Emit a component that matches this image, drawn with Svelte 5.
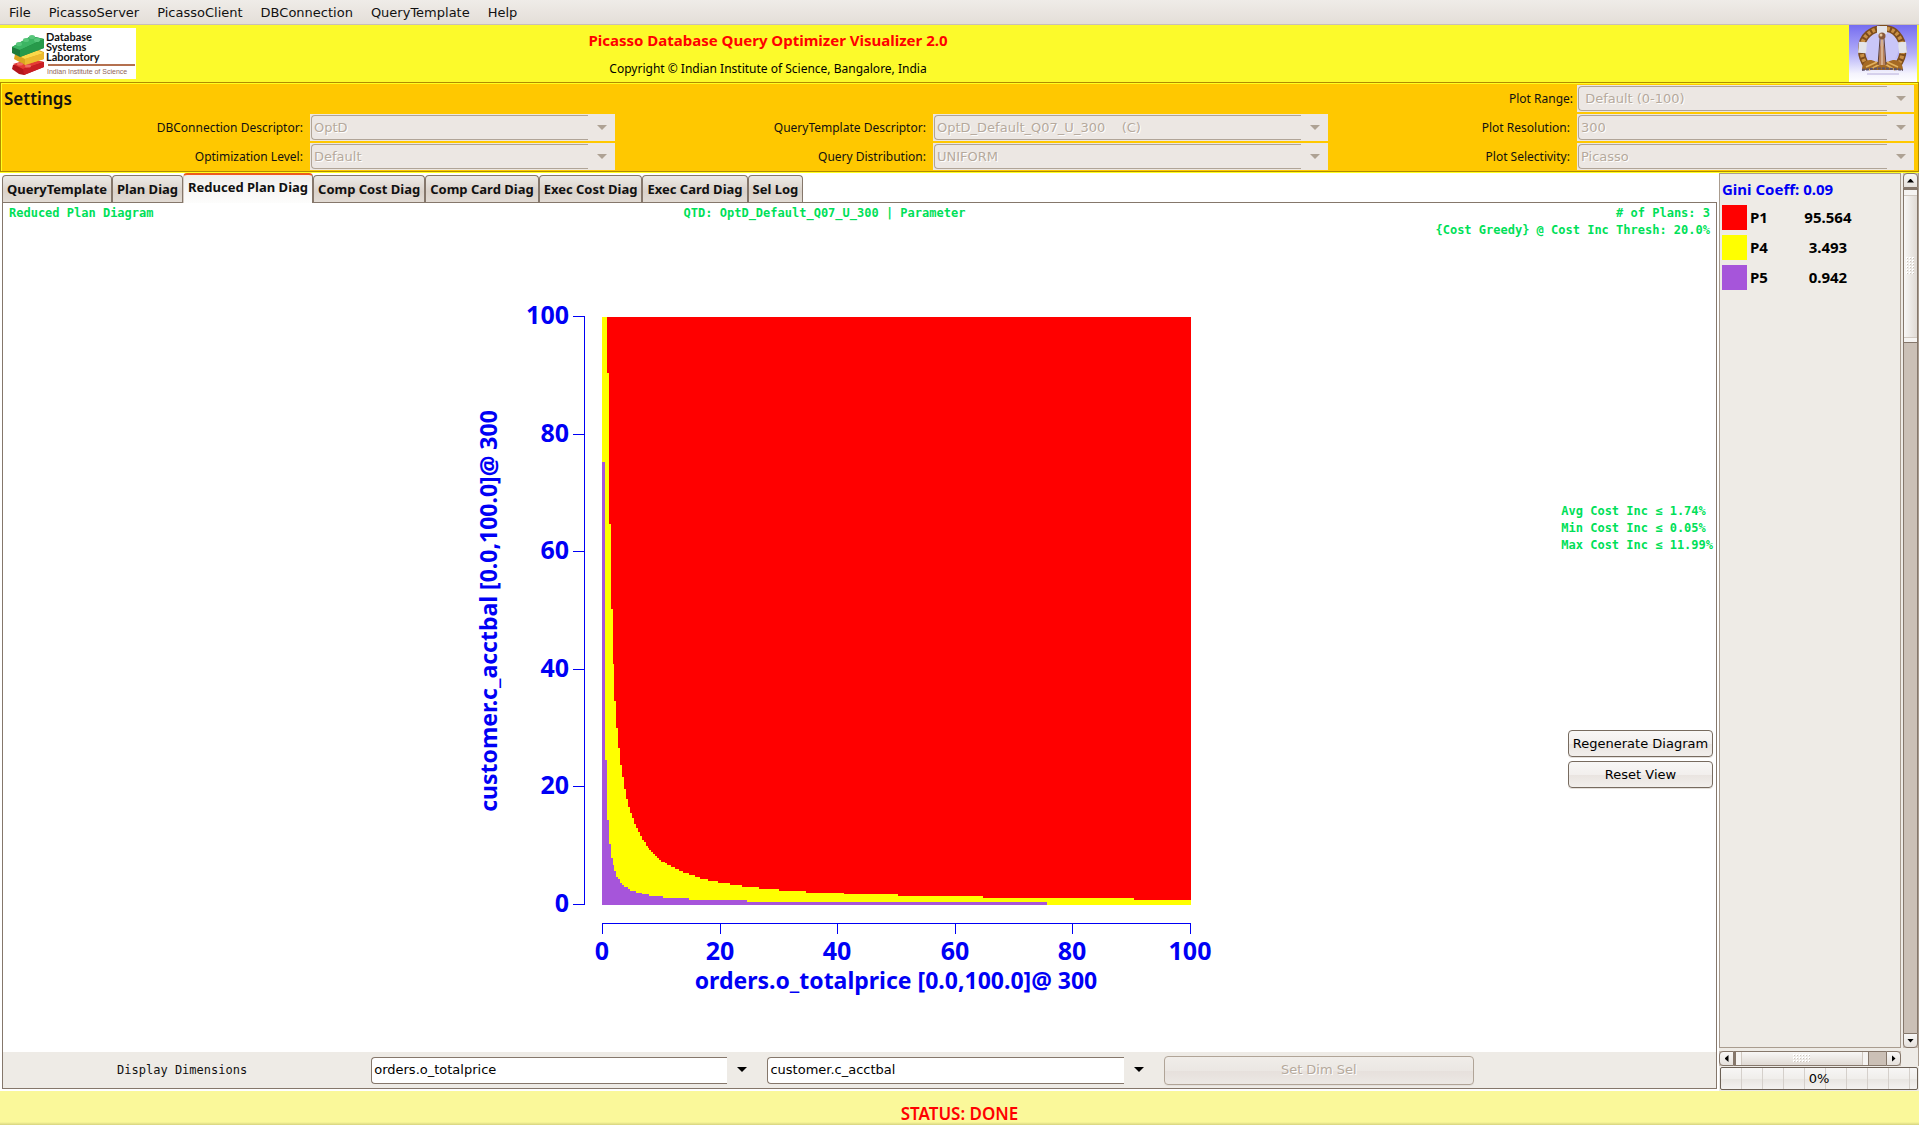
<script>
	const menus = ['File', 'PicassoServer', 'PicassoClient', 'DBConnection', 'QueryTemplate', 'Help'];

	const settings = [
		{ id: 'range', label: 'Plot Range:', value: '\u00a0Default (0-100)' },
		{ id: 'db', label: 'DBConnection Descriptor:\u00a0', value: 'OptD' },
		{ id: 'qtd', label: 'QueryTemplate Descriptor:\u00a0', value: 'OptD_Default_Q07_U_300\u00a0\u00a0\u00a0\u00a0(C)' },
		{ id: 'res', label: 'Plot Resolution:\u00a0', value: '300' },
		{ id: 'opt', label: 'Optimization Level:\u00a0', value: 'Default' },
		{ id: 'dist', label: 'Query Distribution:\u00a0', value: 'UNIFORM' },
		{ id: 'sel', label: 'Plot Selectivity:\u00a0', value: 'Picasso' }
	];

	const tabs = [
		'QueryTemplate',
		'Plan Diag',
		'Reduced Plan Diag',
		'Comp Cost Diag',
		'Comp Card Diag',
		'Exec Cost Diag',
		'Exec Card Diag',
		'Sel Log'
	];
	let activeTab = $state('Reduced Plan Diag');

	const dimensions = ['orders.o_totalprice', 'customer.c_acctbal'];
	let xDim = $state('orders.o_totalprice');
	let yDim = $state('customer.c_acctbal');

	const plans = [
		{ name: 'P1', share: '95.564', color: '#ff0000' },
		{ name: 'P4', share: '3.493', color: '#ffff00' },
		{ name: 'P5', share: '0.942', color: '#a655da' }
	];

	const costs = ['Avg Cost Inc ≤ 1.74%', 'Min Cost Inc ≤ 0.05%', 'Max Cost Inc ≤ 11.99%'];

	const ticks = [0, 20, 40, 60, 80, 100];
	const plotWidth = 589;
	const plotHeight = 588;

	// [right edge, top edge] of each column in the staircase
	const p4Steps = [
		[5, 0], [7, 56], [9, 207], [11, 292], [12, 347], [14, 384], [16, 411], [18, 431],
		[20, 448], [22, 460], [24, 472], [26, 482], [28, 490], [30, 496], [32, 501], [34, 507],
		[36, 511], [38, 515], [40, 519], [42, 523], [44, 525], [46, 529], [47, 531], [49, 533],
		[51, 535], [53, 537], [55, 539], [57, 541], [59, 543], [63, 545], [65, 546], [69, 548],
		[73, 550], [77, 552], [81, 554], [87, 556], [93, 558], [98, 560], [106, 562], [116, 564],
		[128, 566], [140, 568], [157, 570], [177, 572], [204, 574], [242, 576], [296, 577],
		[381, 579], [532, 581], [589, 583]
	];
	const p5Steps = [
		[3, 145], [5, 443], [7, 503], [9, 527], [11, 541], [12, 548], [14, 554], [16, 560],
		[18, 562], [20, 566], [22, 568], [26, 570], [28, 572], [34, 574], [40, 576], [47, 577],
		[61, 579], [87, 581], [145, 583], [445, 585]
	];

	function staircase(steps) {
		let d = `M0 ${plotHeight}V${steps[0][1]}`;
		for (const [x, y] of steps) {
			d += `V${y}H${x}`;
		}
		return d + `V${plotHeight}Z`;
	}
</script>

<svelte:head>
	<title>Picasso Database Query Optimizer Visualizer 2.0</title>
</svelte:head>

{#snippet grip(cols, rows)}
	<svg width={cols * 3} height={rows * 3} aria-hidden="true">
		{#each Array(cols) as _, c}
			{#each Array(rows) as _, r}
				<rect x={c * 3} y={r * 3} width="2" height="2" fill="#fff" />
				<rect x={c * 3 + 1} y={r * 3 + 1} width="1" height="1" fill="#cdc5bd" />
			{/each}
		{/each}
	</svg>
{/snippet}

<div class="app">
	<nav class="menubar">
		{#each menus as menu}
			<button class="menu">{menu}</button>
		{/each}
	</nav>

	<header class="banner">
		<svg class="logo" width="136" height="51" viewBox="0 0 136 51" role="img" aria-label="Database Systems Laboratory">
			<rect width="136" height="51" fill="#fff" />
			<path d="M13 37L33 32L44 34V39L24 47L19 46L12 41Z" fill="#b3151b" />
			<path d="M13 36L30 31L44 34L23 41Z" fill="#e43a35" />
			<path d="M23 41L44 34V39L24 47Z" fill="#c81e24" />
			<path d="M15 26L36 21L44 24V31L25 37L14 31Z" fill="#d9a520" />
			<path d="M15 26L36 22L44 25L25 31Z" fill="#fbd84a" />
			<path d="M25 31L44 25V31L25 37Z" fill="#ecb92f" />
			<path d="M12 19L31 8L44 11V20L20 29L12 25Z" fill="#1c7a3c" />
			<path d="M12 19L31 8L44 11L20 22Z" fill="#3cb563" />
			<path d="M20 22L44 11V20L20 29Z" fill="#279a4a" />
			<g fill="#58c67b">
				<ellipse cx="19" cy="16" rx="3" ry="2" />
				<ellipse cx="26" cy="12" rx="3" ry="2" />
				<ellipse cx="32" cy="9" rx="3" ry="2" />
				<ellipse cx="37" cy="12" rx="3" ry="2" />
			</g>
			<g fill="#f06a60">
				<ellipse cx="20" cy="36" rx="3" ry="1.5" />
				<ellipse cx="28" cy="38" rx="3" ry="1.5" />
			</g>
			<g class="logo-name" fill="#111">
				<text x="46" y="13">Database</text>
				<text x="46" y="23">Systems</text>
				<text x="46" y="33">Laboratory</text>
			</g>
			<rect x="48" y="36" width="87" height="2" fill="#b4704f" />
			<text class="logo-sub" x="47" y="46" fill="#8f6558">Indian Institute of Science</text>
		</svg>

		<div class="titles">
			<h1>Picasso Database Query Optimizer Visualizer 2.0</h1>
			<p>Copyright © Indian Institute of Science, Bangalore, India</p>
		</div>

		<svg class="emblem" width="68" height="57" viewBox="0 0 68 57" role="img" aria-label="Indian Institute of Science">
			<defs>
				<linearGradient id="sky" x1="0" y1="0" x2="0" y2="1">
					<stop offset="0" stop-color="#766df0" />
					<stop offset="0.5" stop-color="#b3aff8" />
					<stop offset="0.85" stop-color="#f4f3fd" />
					<stop offset="1" stop-color="#fff" />
				</linearGradient>
			</defs>
			<rect width="68" height="57" fill="url(#sky)" />
			<ellipse cx="33" cy="22" rx="17" ry="18" fill="#c9c6f8" />
			<path d="M18 41C10 30 11 16 19 9S41 1 48 9S57 30 48 41" fill="none" stroke="#7d4c1c" stroke-width="7" />
			<path d="M18 41C10 30 11 16 19 9S41 1 48 9S57 30 48 41" fill="none" stroke="#c98f45" stroke-width="4" stroke-dasharray="3 2" />
			<path d="M13 28L14 17M54 28L53 17M28 5H38" fill="none" stroke="#e4e4e8" stroke-width="8" />
			<path d="M13 45C13 37 19 32 27 37H39C47 32 54 37 54 45Z" fill="#a56a24" />
			<path d="M17 42L28 37M49 42L38 37M20 45L31 39M46 45L36 39" stroke="#e2b15c" stroke-width="1.5" />
			<path d="M32 13H34L37 40H29Z" fill="#b9825a" />
			<path d="M33 13V40" stroke="#f2dcc0" />
			<path d="M31 14L29 40M35 14L37 40" stroke="#5b3f38" />
			<circle cx="33" cy="11" r="3.5" fill="#8a5a3a" />
			<circle cx="32" cy="10" r="1.5" fill="#e8c9a0" />
			<path d="M13 45Q33 42 54 45" fill="none" stroke="#5e5368" stroke-width="2" stroke-dasharray="3 1" />
			<path d="M18 49H50" stroke="#d5d0ec" stroke-width="2" />
		</svg>
	</header>

	<section class="settings">
		<h2>Settings</h2>
		{#each settings as s}
			<label for={s.id} style:grid-area="{s.id}-l">{s.label}</label>
			<div class="combo disabled" style:grid-area={s.id}>
				<select id={s.id} disabled>
					<option>{s.value}</option>
				</select>
			</div>
		{/each}
	</section>

	<div class="body">
		<main>
			<div class="tabs" role="tablist">
				{#each tabs as tab}
					<button
						class="tab"
						class:active={activeTab === tab}
						role="tab"
						aria-selected={activeTab === tab}
						onclick={() => (activeTab = tab)}
					>
						{tab}
					</button>
				{/each}
			</div>

			<div class="panel">
				<div class="plot">
					<div class="plot-head">
						<p>Reduced Plan Diagram</p>
						<p class="center">QTD: OptD_Default_Q07_U_300 | Parameter</p>
						<p class="right"># of Plans: 3<br />&lbrace;Cost Greedy&rbrace; @ Cost Inc Thresh: 20.0%</p>
					</div>

					<svg class="chart" viewBox="-20 0 800 700" role="img" aria-label="Reduced plan diagram">
						<g transform="translate(122 21)">
							<rect width={plotWidth} height={plotHeight} fill={plans[0].color} />
							<path d={staircase(p4Steps)} fill={plans[1].color} />
							<path d={staircase(p5Steps)} fill={plans[2].color} />

							<path class="axis" d="M-18 -1V588M0 606H589" />
							{#each ticks as t}
								{@const x = Math.round((t / 100) * (plotWidth - 1))}
								{@const y = Math.round(plotHeight - 1 - (t / 100) * plotHeight)}
								<path class="axis" d="M-29 {y}H-18M{x} 606V617" />
								<text class="tick" x="-33" y={y + 8} text-anchor="end">{t}</text>
								<text class="tick" {x} y="643" text-anchor="middle">{t}</text>
							{/each}
							<text class="name" x="294" y="672" text-anchor="middle">orders.o_totalprice [0.0,100.0]@ 300</text>
							<text class="name" transform="translate(-105 294) rotate(-90)" text-anchor="middle">customer.c_acctbal [0.0,100.0]@ 300</text>
						</g>
					</svg>

					<div class="tools">
						<div class="costs">
							{#each costs as cost}
								<p>{cost}</p>
							{/each}
						</div>
						<button class="btn">Regenerate Diagram</button>
						<button class="btn">Reset View</button>
					</div>
				</div>

				<div class="dims">
					<span class="dims-label">Display Dimensions</span>
					<div class="combo">
						<select bind:value={xDim} aria-label="X dimension">
							{#each dimensions as dim}
								<option>{dim}</option>
							{/each}
						</select>
					</div>
					<div class="combo">
						<select bind:value={yDim} aria-label="Y dimension">
							{#each dimensions as dim}
								<option>{dim}</option>
							{/each}
						</select>
					</div>
					<button class="btn" disabled>Set Dim Sel</button>
				</div>
			</div>
		</main>

		<aside>
			<div class="scroller">
				<div class="legend">
					<p class="gini">Gini Coeff: 0.09</p>
					<table>
						<tbody>
							{#each plans as plan}
								<tr>
									<td class="swatch"><i style:background={plan.color}></i></td>
									<th scope="row">{plan.name}</th>
									<td class="share">{plan.share}</td>
								</tr>
							{/each}
						</tbody>
					</table>
				</div>
				<div class="vbar">
					<button class="arrow up" aria-label="Scroll up"></button>
					<div class="thumb">{@render grip(3, 6)}</div>
					<div class="trough"></div>
					<button class="arrow down" aria-label="Scroll down"></button>
				</div>
				<div class="hbar">
					<button class="arrow left" aria-label="Scroll left"></button>
					<div class="thumb">{@render grip(6, 3)}</div>
					<div class="trough"></div>
					<button class="arrow next" aria-label="Scroll right"></button>
				</div>
			</div>
			<div class="progress" role="progressbar" aria-label="Progress" aria-valuenow="0">0%</div>
		</aside>
	</div>

	<footer>STATUS: DONE</footer>
</div>

<style>
	:global(body) {
		margin: 0;
	}

	.app {
		--ui: 'DejaVu Sans', sans-serif;
		--label: 'Noto Sans', 'Open Sans', sans-serif;
		--mono: 'DejaVu Sans Mono', monospace;
		--line: #85776b;
		--face: #eeebe6;
		display: flex;
		flex-direction: column;
		min-height: 100vh;
		background: #fff;
		color: #111;
		font: 13px/16px var(--ui);
	}

	h1,
	h2,
	p {
		margin: 0;
	}

	button,
	select {
		box-sizing: border-box;
		margin: 0;
		font: inherit;
		color: inherit;
	}

	.menubar {
		display: flex;
		height: 24px;
		border-bottom: 1px solid #c9bfb6;
		background: linear-gradient(#efece8, #e4ded8);
	}

	.menu {
		padding: 1px 9px 0;
		border: 0;
		background: none;
	}

	.banner {
		display: grid;
		grid-template-columns: 136px 1264fr 449fr 70px;
		align-items: center;
		height: 57px;
		background: #fcfa2b;
	}

	.logo,
	.emblem {
		display: block;
	}

	.emblem {
		grid-column: 4;
	}

	.logo-name {
		font: bold 11px 'Lato', sans-serif;
	}

	.logo-sub {
		font: 7px 'Liberation Sans', sans-serif;
	}

	.titles {
		text-align: center;
		font: 12px/18px var(--label);
		color: #000;
	}

	.titles h1 {
		margin-bottom: 10px;
		font: bold 15px/20px var(--label);
		color: #f00;
	}

	.settings {
		display: grid;
		grid-template-columns: 308fr 305fr 318fr 395fr 249fr 337fr 3px;
		grid-template-areas:
			'title title . . range-l range .'
			'db-l db qtd-l qtd res-l res .'
			'opt-l opt dist-l dist sel-l sel .';
		grid-auto-rows: 27px;
		gap: 2px 0;
		margin-bottom: 1px;
		padding: 2px 1px 1px;
		border: 1px solid #b08c00;
		background: #ffc800;
		box-shadow: inset 1px 1px #ffff20, 0 1px #ffff20;
		font: 12px/27px var(--label);
	}

	.settings h2 {
		grid-area: title;
		padding-left: 2px;
		font: 600 17px/27px var(--label);
	}

	.settings label {
		padding-right: 4px;
		text-align: right;
		white-space: nowrap;
	}

	.combo {
		position: relative;
		display: flex;
		min-width: 0;
		padding: 1px 27px 1px 1px;
	}

	.combo::after {
		content: '';
		position: absolute;
		right: 8px;
		top: calc(50% - 3px);
		border: 5px solid transparent;
		border-top-color: #000;
		border-bottom: 0;
		pointer-events: none;
	}

	.combo select {
		flex: 1;
		min-width: 0;
		padding: 0 2px;
		appearance: none;
		border: 1px solid var(--line);
		border-right: 0;
		border-radius: 4px 0 0 4px;
		background: #fff;
		color: #000;
		font: 13px/20px var(--ui);
	}

	.combo.disabled {
		background: #ece7e3;
	}

	.combo.disabled::after {
		border-top-color: #aea294;
	}

	.combo.disabled select {
		border-color: #b0a497;
		background: #ece7e3;
		color: #b5a99c;
		opacity: 1;
		text-shadow: 1px 1px #fff;
	}

	.body {
		flex: 1;
		display: flex;
		gap: 2px;
	}

	main {
		flex: 1;
		min-width: 0;
		display: flex;
		flex-direction: column;
		padding: 0 0 2px 2px;
	}

	.tabs {
		display: flex;
		align-items: flex-end;
		height: 29px;
	}

	.tab {
		height: 27px;
		padding: 0 4px;
		border: 1px solid var(--line);
		border-bottom: 0;
		border-radius: 4px 4px 0 0;
		background: linear-gradient(#edeae6, #dad2ca 60%, #e2dbd4);
		font: bold 13px/24px var(--label);
		white-space: nowrap;
	}

	.tab.active {
		position: relative;
		height: 30px;
		margin-bottom: -1px;
		padding-bottom: 5px;
		border-top: 2px solid #ee5a1c;
		border-left-color: #d5ccc4;
		background: linear-gradient(#f1efed, #fdfdfc);
	}

	.panel {
		flex: 1;
		display: flex;
		flex-direction: column;
		border: 1px solid var(--line);
	}

	.plot {
		flex: 1;
		display: grid;
		grid-template-columns: 1fr minmax(0, 800px) 1fr;
		grid-template-rows: auto 1fr;
		color: #00df58;
		font: bold 12px/17px var(--mono);
	}

	.plot-head {
		grid-column: 1 / -1;
		display: grid;
		grid-template-columns: 1fr auto 1fr;
		padding: 2px 6px 1px;
	}

	.center {
		padding-right: 70px;
	}

	.right {
		text-align: right;
	}

	.chart {
		grid-column: 2;
		align-self: center;
		width: 100%;
	}

	.axis {
		fill: none;
		stroke: #0000f5;
		shape-rendering: crispEdges;
	}

	.tick,
	.name {
		fill: #0000f5;
		font: bold 25px var(--label);
	}

	.name {
		font-size: 23px;
	}

	.tools {
		display: flex;
		flex-direction: column;
		align-items: flex-end;
		gap: 4px;
		padding: 263px 3px 0 0;
	}

	.costs {
		margin-bottom: 172px;
		white-space: nowrap;
	}

	.btn {
		width: 145px;
		height: 27px;
		padding: 0;
		border: 1px solid #776b5f;
		border-radius: 4px;
		background: linear-gradient(#f8f7f6, #f2efed 50%, #e9e4e0 52%, #f2efec);
		box-shadow: 0 1px #e4e0dc;
		color: #000;
		font: 13px/16px var(--ui);
		white-space: nowrap;
	}

	.dims {
		display: grid;
		grid-template-columns: 358fr 386fr 386fr 310fr 232fr;
		column-gap: 10px;
		align-items: center;
		height: 36px;
		background: var(--face);
	}

	.dims-label {
		text-align: center;
		font: 12px/16px var(--mono);
	}

	.dims .combo {
		padding: 0 30px 0 0;
	}

	.dims .combo::after {
		right: 10px;
	}

	.dims select {
		height: 27px;
	}

	.dims .btn {
		width: 100%;
		height: 29px;
		border-color: #b0a497;
		background: linear-gradient(#f0ede9, #ebe7e3 50%, #e6e0dc 52%, #ece8e4);
		color: #b5a99c;
		text-shadow: 1px 1px #fff;
	}

	aside {
		flex: 0 0 200px;
		display: flex;
		flex-direction: column;
		background: var(--face);
	}

	.scroller {
		flex: 1;
		display: grid;
		grid-template-columns: 1fr 15px;
		grid-template-rows: 1fr 15px;
		gap: 3px 2px;
		margin-bottom: 1px;
		border-right: 1px solid #a99c8f;
	}

	.legend {
		border: 1px solid #a99c8f;
		color: #000;
		font: bold 15px/18px var(--label);
	}

	.gini {
		padding: 6px 2px 4px;
		color: #0000f5;
	}

	table {
		border-spacing: 0;
		font-size: 15px;
	}

	tr {
		height: 30px;
	}

	td,
	th {
		padding: 0;
		font-weight: bold;
		text-align: left;
	}

	.swatch {
		width: 28px;
		padding-left: 2px;
	}

	.swatch i {
		display: block;
		width: 25px;
		height: 25px;
	}

	.share {
		width: 100px;
		padding-left: 10px;
		text-align: center;
	}

	.vbar,
	.hbar {
		display: flex;
		background: #cbc0b6;
	}

	.vbar {
		flex-direction: column;
	}

	.thumb {
		box-sizing: border-box;
		display: flex;
		align-items: center;
		justify-content: center;
		border: 1px solid var(--line);
	}

	.vbar .thumb {
		flex: 152;
		border-top-width: 2px;
		background: linear-gradient(90deg, #f8f7f6, #e0dad4);
		box-shadow: inset 0 5px #f6f4f2, inset 0 6px #d0c8c0, inset 0 -4px #f6f4f2, inset 0 -5px #d0c8c0;
	}

	.vbar .trough {
		flex: 692;
		border: solid var(--line);
		border-width: 0 1px;
	}

	.hbar .thumb {
		flex: 135;
		border-left-width: 2px;
		background: linear-gradient(#f8f7f6, #e0dad4);
		box-shadow: inset 5px 0 #f6f4f2, inset 6px 0 #d0c8c0, inset -5px 0 #f6f4f2, inset -6px 0 #d0c8c0;
	}

	.hbar .trough {
		flex: 17;
		border: solid var(--line);
		border-width: 1px 0;
	}

	.arrow {
		display: flex;
		align-items: center;
		justify-content: center;
		flex: 0 0 15px;
		width: 15px;
		height: 15px;
		padding: 0;
		border: 1px solid var(--line);
		background: linear-gradient(#f8f7f6, #e6e1dc);
	}

	.arrow::before {
		content: '';
		width: 7px;
		height: 4px;
		background: #000;
		clip-path: polygon(50% 0, 100% 100%, 0 100%);
	}

	.up {
		border-radius: 4px 4px 0 0;
	}

	.down {
		border-radius: 0 0 4px 4px;
	}

	.left {
		border-radius: 4px 0 0 4px;
	}

	.next {
		border-radius: 0 4px 4px 0;
	}

	.down::before {
		clip-path: polygon(0 0, 100% 0, 50% 100%);
	}

	.left::before,
	.next::before {
		width: 4px;
		height: 7px;
	}

	.left::before {
		clip-path: polygon(100% 0, 100% 100%, 0 50%);
	}

	.next::before {
		clip-path: polygon(0 0, 100% 50%, 0 100%);
	}

	.progress {
		height: 21px;
		margin: 0 1px 1px;
		border: 1px solid #6b6055;
		border-radius: 2px;
		background:
			repeating-linear-gradient(90deg, transparent 0 20px, #d5d0cb 20px 21px),
			linear-gradient(#f7f6f5, #f0eeeb 50%, #e8e5e1 52%, #f4f2f0);
		color: #000;
		line-height: 22px;
		text-align: center;
	}

	footer {
		box-sizing: border-box;
		height: 34px;
		padding-top: 12px;
		background: linear-gradient(#faf89a 31px, #d6d380);
		color: #f00;
		font: 600 17px/22px var(--label);
		text-align: center;
	}
</style>
